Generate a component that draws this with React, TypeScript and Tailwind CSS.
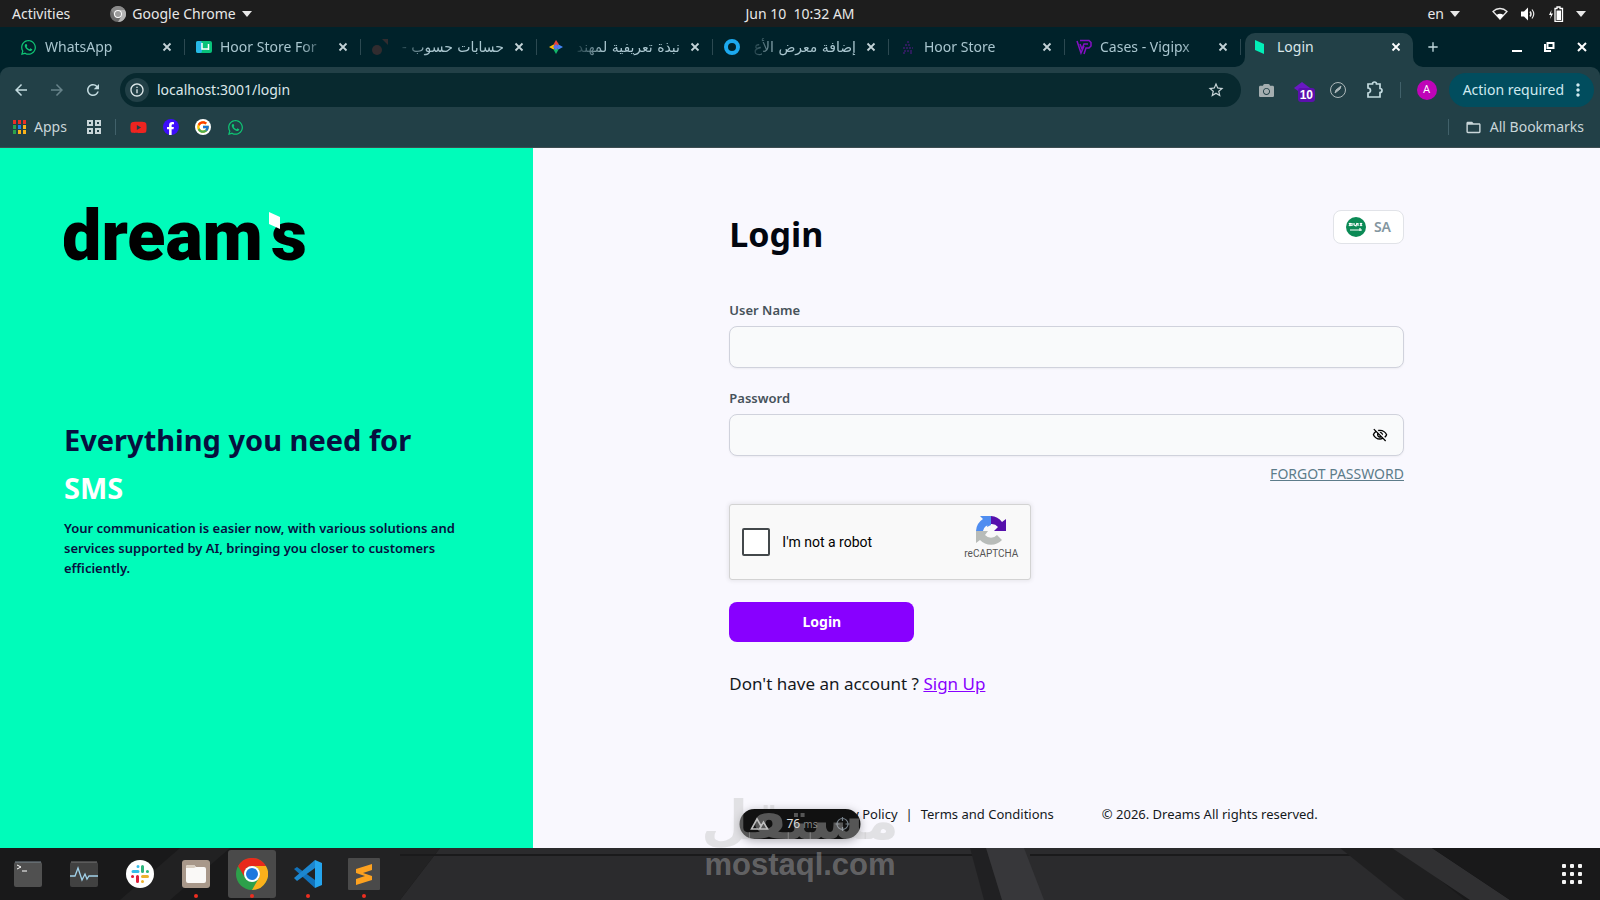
import { useState } from "react";
import type { ReactNode } from "react";
import clsx from "clsx";
import { FaCamera, FaFacebookF, FaWhatsapp, FaYoutube } from "react-icons/fa";
import { FcGoogle } from "react-icons/fc";
import {
  MdAdd,
  MdArrowBack,
  MdArrowForward,
  MdFolderOpen,
  MdInfoOutline,
  MdMoreVert,
  MdOutlineVisibilityOff,
  MdRefresh,
  MdStarBorder,
} from "react-icons/md";

/**
 * Desktop session: system bar, browser window with the Dreams login page, dock.
 */

interface TabItem {
  title: string;
  icon: ReactNode;
  rtl?: boolean;
}

function Caret() {
  return (
    <svg width="10" height="6" viewBox="0 0 10 6" fill="currentColor" aria-hidden="true">
      <path d="M0 0h10L5 6z" />
    </svg>
  );
}

function Cross() {
  return (
    <svg width="14" height="14" viewBox="0 0 14 14" stroke="currentColor" strokeWidth="1.800" aria-hidden="true">
      <path d="M3.500 3.500l7 7M10.500 3.500l-7 7" />
    </svg>
  );
}

function ChromeMark({ size, mono = false }: { size: number; mono?: boolean }) {
  const [red, yellow, green, blue] = mono
    ? ["#8a8a8a", "#b5b5b5", "#6c6c6c", "#9c9c9c"]
    : ["#e8291c", "#fbb01b", "#2da04a", "#1a78de"];
  return (
    <svg width={size} height={size} viewBox="0 0 32 32" aria-hidden="true">
      <circle cx="16" cy="16" r="16" fill={green} />
      <path d="M2.1 8A16 16 0 0 1 29.9 8H16a8 8 0 0 0-6.9 12z" fill={red} />
      <path d="M29.9 8A16 16 0 0 1 16 32l6.9-12A8 8 0 0 0 16 8z" fill={yellow} />
      <circle cx="16" cy="16" r="8" fill="#fff" />
      <circle cx="16" cy="16" r="6" fill={blue} />
    </svg>
  );
}

const TABS: TabItem[] = [
  { title: "WhatsApp", icon: <FaWhatsapp size={17} className="text-[#0fc474]" /> },
  {
    title: "Hoor Store For",
    icon: (
      <svg width="16" height="16" viewBox="0 0 16 16">
        <rect y="2" width="16" height="12" rx="2" fill="#08c27a" />
        <rect y="2" width="6" height="12" rx="2" fill="#27b8e8" />
        <path d="M6 4v6h7M12.500 5v6" fill="none" stroke="#fff" strokeWidth="1.500" />
      </svg>
    ),
  },
  {
    title: "حسابات حسوب -",
    rtl: true,
    icon: (
      <svg width="16" height="16" viewBox="0 0 16 16" fill="#312c2f">
        <circle cx="5" cy="11" r="5" />
        <path d="M10 0h6v6z" />
      </svg>
    ),
  },
  {
    title: "نبذة تعريفية لمهند",
    rtl: true,
    icon: (
      <svg width="16" height="16" viewBox="0 0 16 16">
        <path d="M8 1 5.500 5.500 8 8l3-2.500z" fill="#ea4335" />
        <path d="M1 8l4.500-2.500L8 8l-2.500 2.500z" fill="#fbbc04" />
        <path d="M8 15l-2.500-4.500L8 8l2.500 2.500z" fill="#12b76a" />
        <path d="M15 8l-4.500 2.500L8 8l2.500-2.500z" fill="#4285f4" />
        <path d="M8 5l3 3-3 3-3-3z" fill="#5b6ee8" />
      </svg>
    ),
  },
  {
    title: "إضافة معرض الأع",
    rtl: true,
    icon: (
      <svg width="16" height="16" viewBox="0 0 16 16">
        <circle cx="8" cy="8" r="6" fill="none" stroke="#1ca9ee" strokeWidth="4" />
      </svg>
    ),
  },
  {
    title: "Hoor Store",
    icon: (
      <svg width="16" height="16" viewBox="0 0 16 16" fill="none" stroke="#2c1d5c" strokeWidth="2" strokeDasharray="2 1">
        <path d="M8 2v3M5 6h6M3 9h10M4 12h8M3 14h3M10 14h3" />
      </svg>
    ),
  },
  {
    title: "Cases - Vigipx",
    icon: (
      <svg width="16" height="16" viewBox="0 0 16 16" fill="none" stroke="#8410c4" strokeWidth="1.500">
        <path d="M1 2l4 12 3-7M4 1.500h9l2 2V7l-2 2h-3l-2 6M4 5l2 5 2-5h4" />
      </svg>
    ),
  },
];

function BrowserTab({ tab }: { tab: TabItem }) {
  return (
    <li className="flex w-44 min-w-0 items-center text-[#a9c6cf]">
      <div className="flex min-w-0 flex-1 items-center gap-2 pr-2.5 pl-[11px]">
        <span className="shrink-0">{tab.icon}</span>
        <button
          type="button"
          dir={tab.rtl ? "rtl" : "ltr"}
          className={clsx(
            "min-w-0 flex-1 overflow-hidden text-start text-sm leading-6 whitespace-nowrap",
            tab.rtl
              ? "font-[DejaVu_Sans,sans-serif] [mask-image:linear-gradient(to_left,#000_70%,transparent)]"
              : "[mask-image:linear-gradient(to_right,#000_75%,transparent)]",
          )}
        >
          {tab.title}
        </button>
        <button type="button" aria-label={`Close ${tab.title}`} className="shrink-0 text-[#c3d3d7]">
          <Cross />
        </button>
      </div>
      <span className="h-4 w-px bg-[#2c4951]" />
    </li>
  );
}

function SystemBar() {
  return (
    <header className="grid h-[27px] grid-cols-3 items-center bg-[#1d1d1d] text-sm text-[#e8e8e8]">
      <div className="flex items-center pl-3">
        <button type="button">Activities</button>
        <button type="button" className="ml-10 flex items-center gap-1.5">
          <ChromeMark size={16} mono />
          Google Chrome
          <Caret />
        </button>
      </div>
      <time className="text-center whitespace-pre">Jun 10  10:32 AM</time>
      <div className="flex items-center justify-end pr-3.5">
        <button type="button" className="mr-8 flex items-center gap-1.5">
          en
          <Caret />
        </button>
        <button type="button" aria-label="System menu" className="flex items-center gap-3">
          <svg width="16" height="16" viewBox="0 0 16 16" fill="none">
            <path d="M1 5.500C5 1.500 11 1.500 15 5.500L8 13z" stroke="#e8e8e8" strokeWidth="1.300" />
            <path d="M4.500 9Q8 6.500 11.500 9L8 13.500z" fill="#fff" />
          </svg>
          <svg width="16" height="16" viewBox="0 0 16 16" fill="none" stroke="#e8e8e8">
            <path d="M1 5.500h3l4-4v13l-4-4H1z" fill="#fff" stroke="none" />
            <path d="M10 5.500q2 2.500 0 5" strokeWidth="1.500" />
            <path d="M12 3.500q3.500 4.500 0 9" strokeWidth="1.200" />
          </svg>
          <svg width="16" height="16" viewBox="0 0 16 16" fill="none">
            <path d="M3.500 4 1 9h2l-1 4 3-5.500H3z" fill="#fff" />
            <path d="M7 2.500h2V1h3v1.500h2.500v13H7z" stroke="#fff" strokeWidth="1.300" />
            <path d="M8.500 4.500H13V14H8.500z" fill="#fff" />
          </svg>
          <Caret />
        </button>
      </div>
    </header>
  );
}

function BrowserChrome() {
  return (
    <div className="bg-[#00222a] text-[#c9d6d9]">
      <nav aria-label="Tabs" className="flex h-10 items-center pl-[9px]">
        <ul className="flex h-10 min-w-0 items-center">
          {TABS.map((tab, i) => (
            <BrowserTab key={i} tab={tab} />
          ))}
          <li className="relative mx-1 flex h-[34px] w-[168px] items-center gap-2 self-end rounded-t-[10px] bg-[#224047] pr-2.5 pb-1.5 pl-2">
            <svg width="16" height="16" viewBox="0 0 16 16">
              <path d="M2 1l9 4v10l-9-4z" fill="#02efb8" />
            </svg>
            <button type="button" aria-current="page" className="flex-1 text-left text-sm leading-6 text-[#dbe7ea]">
              Login
            </button>
            <button type="button" aria-label="Close Login" className="text-white">
              <Cross />
            </button>
            {/* flared feet of the active tab */}
            <svg className="absolute bottom-0 -left-2.5" width="10" height="10" viewBox="0 0 10 10">
              <path d="M10 0v10H0A10 10 0 0 0 10 0z" fill="#224047" />
            </svg>
            <svg className="absolute -right-2.5 bottom-0" width="10" height="10" viewBox="0 0 10 10">
              <path d="M0 0v10h10A10 10 0 0 1 0 0z" fill="#224047" />
            </svg>
          </li>
        </ul>
        <button type="button" aria-label="New tab" className="ml-2 text-[#c3dbe0]">
          <MdAdd size={16} />
        </button>
        <div className="ml-auto flex items-center gap-[21px] pr-3 text-white">
          <button type="button" aria-label="Minimize" className="pt-2">
            <svg width="10" height="2" viewBox="0 0 10 2">
              <path d="M0 1h10" stroke="currentColor" strokeWidth="2" />
            </svg>
          </button>
          <button type="button" aria-label="Restore">
            <svg width="12" height="12" viewBox="0 0 12 12" fill="none" stroke="currentColor" strokeWidth="2">
              <path d="M4.500 2h6v5h-6zM2 3v7h6" />
            </svg>
          </button>
          <button type="button" aria-label="Close window">
            <svg width="12" height="12" viewBox="0 0 12 12" stroke="currentColor" strokeWidth="2">
              <path d="M2 2l8 8M10 2l-8 8" />
            </svg>
          </button>
        </div>
      </nav>

      <div className="rounded-t-[9px] border-b border-[#3e4d51] bg-[#224047]">
        <div className="flex h-[46px] items-center pr-1.5 pl-3">
          <div className="flex items-center gap-[18px]">
            <button type="button" aria-label="Back">
              <MdArrowBack size={18} className="text-[#c3dbe0]" />
            </button>
            <button type="button" aria-label="Forward">
              <MdArrowForward size={18} className="text-[#67838a]" />
            </button>
            <button type="button" aria-label="Reload">
              <MdRefresh size={18} className="text-[#c3dbe0]" />
            </button>
          </div>
          <div className="ml-[18px] flex h-[34px] flex-1 items-center rounded-full bg-[#08292f] pr-4 pl-[5px]">
            <button
              type="button"
              aria-label="Site information"
              className="flex size-6 items-center justify-center rounded-full bg-[#224047] text-[#dfe9eb]"
            >
              <MdInfoOutline size={16} />
            </button>
            <input
              aria-label="Address"
              defaultValue="localhost:3001/login"
              className="ml-2 min-w-0 flex-1 bg-transparent text-sm text-[#dbe7ea] outline-none"
            />
            <button type="button" aria-label="Bookmark this tab">
              <MdStarBorder size={18} />
            </button>
          </div>
          <div className="ml-[18px] flex items-center gap-5">
            <FaCamera size={15} className="text-[#a5aeb0]" />
            <span className="relative block size-4">
              <svg width="16" height="12" viewBox="0 0 16 12">
                <path d="M0 6l8-6 8 6-8 6z" fill="#6a18c4" />
              </svg>
              <span className="absolute top-1.5 left-1 rounded-[3px] bg-[#5b10ad] px-[2px] font-[Liberation_Sans,sans-serif] text-[12px] leading-[14px] font-bold text-white">
                10
              </span>
            </span>
            <svg width="16" height="16" viewBox="0 0 16 16" fill="none" stroke="#aeb9bb">
              <circle cx="8" cy="8" r="7.500" />
              <path d="M5 11l1-3 5-4-1 3z" fill="#aeb9bb" />
            </svg>
            <svg width="18" height="18" viewBox="0 0 18 18" fill="none" stroke="#c3dbe0" strokeWidth="1.700">
              <path d="M2 3h4.500a2 2 0 0 1 4 0H14v4.500a2 2 0 0 1 0 4V16H2v-4a2.500 2.500 0 0 0 0-5z" />
            </svg>
          </div>
          <span className="mx-4 h-4 w-px bg-[#41616a]" />
          <button
            type="button"
            aria-label="Profile"
            className="size-5 rounded-full bg-[#c004b8] font-[Roboto,sans-serif] text-[11px] leading-5 text-white"
          >
            A
          </button>
          <button
            type="button"
            className="ml-3 flex h-[34px] items-center gap-1 rounded-full bg-[#014d5e] pr-1.5 pl-3.5 text-sm text-[#cfeaf0]"
          >
            Action required
            <MdMoreVert size={20} />
          </button>
        </div>

        <div className="flex h-[34px] items-center pr-4 pb-1.5 pl-3 text-sm">
          <a href="#apps" className="flex items-center gap-2">
            <svg width="14" height="14" viewBox="0 0 14 14">
              <path d="M1 0h3v4H1zM6 0h3v4H6zM11 0h3v4h-3z" fill="#ee2e24" />
              <path d="M1 5h3v4H1zM1 10h3v4H1z" fill="#2ba24c" />
              <path d="M6 5h3v4H6z" fill="#2180e8" />
              <path d="M11 5h3v4h-3zM6 10h3v4H6zM11 10h3v4h-3z" fill="#f9b31a" />
            </svg>
            Apps
          </a>
          <button type="button" aria-label="Tab groups" className="ml-5">
            <svg width="14" height="14" viewBox="0 0 14 14" fill="none" stroke="currentColor" strokeWidth="2">
              <path d="M1 1h4v4H1zM9 1h4v4H9zM1 9h4v4H1zM9 9h4v4H9z" />
            </svg>
          </button>
          <span className="mx-[14px] h-4 w-px bg-[#41616a]" />
          <div className="flex items-center gap-4">
            <a href="#youtube" aria-label="YouTube" className="text-[#ef2420]">
              <FaYoutube size={17} />
            </a>
            <a
              href="#facebook"
              aria-label="Facebook"
              className="flex size-4 items-end justify-center rounded-full bg-[#3d0dfb] text-white"
            >
              <FaFacebookF size={13} />
            </a>
            <a
              href="#google"
              aria-label="Google"
              className="flex size-4 items-center justify-center rounded-full bg-white"
            >
              <FcGoogle size={14} />
            </a>
            <a href="#whatsapp" aria-label="WhatsApp" className="text-[#0fc474]">
              <FaWhatsapp size={17} />
            </a>
          </div>
          <span className="mr-4 ml-auto h-4 w-px bg-[#41616a]" />
          <button type="button" className="flex items-center gap-2">
            <MdFolderOpen size={17} />
            All Bookmarks
          </button>
        </div>
      </div>
    </div>
  );
}

function DreamsLogo() {
  return (
    <svg width="244" height="54" viewBox="0 0 244 54" role="img" aria-label="dream's">
      <text x="-2" y="53" className="font-[Roboto,sans-serif] text-[70px] font-black">
        dream
      </text>
      <text x="207" y="53" className="font-[Roboto,sans-serif] text-[70px] font-black">
        s
      </text>
      <path d="M205 5l11 5v12l-11-5z" fill="#fff" />
    </svg>
  );
}

function Hero() {
  return (
    <aside className="w-1/3 bg-[#00fcba] px-16 pt-[59px] text-[#07103f]">
      <DreamsLogo />
      <h2 className="mt-[155px] text-[29px] leading-[48px] font-bold">
        Everything you need for
        <span className="block text-white">SMS</span>
      </h2>
      <p className="mt-1.5 max-w-[405px] text-[13px] leading-5 font-semibold">
        Your communication is easier now, with various solutions and services supported by AI,
        bringing you closer to customers efficiently.
      </p>
    </aside>
  );
}

function Recaptcha() {
  return (
    <div className="flex h-[76px] w-[302px] items-center rounded-[3px] border border-[#d3d3d3] bg-[#f9f9f9] px-3 font-[Roboto,sans-serif] shadow-[0_0_4px_1px_rgba(0,0,0,0.08)]">
      <input
        id="robot"
        type="checkbox"
        className="size-7 appearance-none rounded-[2px] border-2 border-[#43484b] bg-white checked:bg-[#4a90e2]"
      />
      <label htmlFor="robot" className="ml-3 text-sm text-black">
        I'm not a robot
      </label>
      <div className="mb-2 ml-auto flex flex-col items-center text-[10px] text-[#555]">
        <svg width="32" height="32" viewBox="0 0 32 32">
          <path d="M5 1h11v9A7 7 0 0 0 8 16H1A15 15 0 0 1 8 4z" fill="#4f8df0" />
          <path d="M16 10l-3-3-1 5z" fill="#4f8df0" />
          <path d="M16 1a15 15 0 0 1 11 6l4-3v12H19l4-4a8 8 0 0 0-7-3z" fill="#5610ac" />
          <path d="M1 16v12l4-3a15 15 0 0 0 22 0l-5-5a8 8 0 0 1-12 0l3-4z" fill="#b8bcb9" />
        </svg>
        <span className="leading-[14px]">reCAPTCHA</span>
      </div>
    </div>
  );
}

const FIELD =
  "block h-[42px] w-full rounded-lg border border-[#d0d2dc] bg-[#f9fafb] px-3 text-sm text-gray-900 shadow-xs outline-none";

const FIELD_LABEL = "block text-[13px] leading-4 font-semibold text-[#46525a]";

function LoginPage() {
  const [showPassword, setShowPassword] = useState(false);

  return (
    <main className="flex flex-1">
      <Hero />
      <section className="flex w-2/3 flex-col bg-[#f9f8fe] px-[12.25%] pt-[62px] text-[#14181c]">
        <div className="flex items-start justify-between">
          <h1 className="text-[34px] leading-[48px] font-bold text-[#02060f]">Login</h1>
          <button
            type="button"
            className="flex h-[34px] items-center gap-2 rounded-lg border border-[#e1e3e8] bg-white px-3 text-sm font-semibold text-[#8496a0]"
          >
            <svg width="20" height="20" viewBox="0 0 20 20">
              <circle cx="10" cy="10" r="10" fill="#0b8a55" />
              <path
                d="M3 6l2 3M5 6L3 9M6 6v3M8 6v2l2 1 1-3M12 6v3M14 6l2 3M16 6l-2 3M4 13h12M14 11v3"
                fill="none"
                stroke="#fff"
                strokeWidth="1.200"
              />
            </svg>
            SA
          </button>
        </div>

        <form className="mt-11" onSubmit={(e) => e.preventDefault()}>
          <label htmlFor="username" className={FIELD_LABEL}>
            User Name
          </label>
          <input id="username" type="text" className={clsx(FIELD, "mt-2")} />

          <label htmlFor="password" className={clsx(FIELD_LABEL, "mt-[22px]")}>
            Password
          </label>
          <div className="relative mt-2">
            <input id="password" type={showPassword ? "text" : "password"} className={FIELD} />
            <button
              type="button"
              aria-label="Show password"
              onClick={() => setShowPassword(!showPassword)}
              className="absolute inset-y-0 right-4 text-black"
            >
              <MdOutlineVisibilityOff size={16} />
            </button>
          </div>
          <div className="mt-2 text-right text-sm text-[#5d7c8a]">
            <a href="#forgot" className="underline">
              FORGOT PASSWORD
            </a>
          </div>

          <div className="mt-5">
            <Recaptcha />
          </div>
          <button
            type="submit"
            className="mt-[22px] h-10 w-[185px] rounded-lg bg-[#8800ff] text-sm font-bold text-white"
          >
            Login
          </button>
        </form>

        <p className="mt-7 text-[17px] leading-7">
          Don't have an account ?{" "}
          <a href="#signup" className="text-[#8800ff] underline">
            Sign Up
          </a>
        </p>

        <footer className="mt-auto flex justify-center gap-12 pb-6 text-[13px] leading-5 whitespace-nowrap">
          <div className="flex gap-2">
            <a href="#privacy">Privacy Policy</a>
            <span>|</span>
            <a href="#terms">Terms and Conditions</a>
          </div>
          <p>© 2026. Dreams All rights reserved.</p>
        </footer>
      </section>
    </main>
  );
}

/** Floating dev-server pill. */
function DevToolsPill() {
  return (
    <div className="absolute bottom-[61px] left-1/2 flex h-[30px] w-[121px] -translate-x-1/2 items-center justify-between rounded-full bg-[#111] px-2.5 text-xs text-[#e0e0e0] shadow-[0_2px_10px_rgba(0,0,0,0.3)]">
      <svg width="20" height="14" viewBox="0 0 20 14" fill="none" stroke="#bdbdbd" strokeWidth="1.600">
        <path d="M9 12H2L7.500 2l4 7M10 12l4-7 4 7z" />
      </svg>
      <span>
        76 <span className="text-[10px] text-[#858585]">ms</span>
      </span>
      <svg width="16" height="16" viewBox="0 0 16 16" fill="none" stroke="#77818a" strokeWidth="1.200">
        <circle cx="8" cy="8" r="5.500" />
        <path d="M8 1v4M8 11v4M1 8h4M11 8h4" />
      </svg>
    </div>
  );
}

function Watermark() {
  return (
    <div className="pointer-events-none absolute bottom-[17px] left-1/2 flex -translate-x-1/2 flex-col items-center font-bold text-[#bdbdbd]/40">
      <span lang="ar" dir="rtl" className="font-[DejaVu_Sans,sans-serif] text-[54px] leading-[52px]">
        مستقل
      </span>
      <span className="font-[Liberation_Sans,sans-serif] text-[31px] leading-9">mostaql.com</span>
    </div>
  );
}

const DOCK = [
  {
    name: "Terminal",
    icon: (
      <svg width="28" height="26" viewBox="0 0 28 26" fill="none">
        <rect width="28" height="25" y="1" rx="2" fill="#505050" />
        <path d="M1 1h26" stroke="#7a8790" />
        <path d="M3 4l4 2-4 2M8 10h5" stroke="#fff" />
      </svg>
    ),
  },
  {
    name: "System Monitor",
    icon: (
      <svg width="28" height="26" viewBox="0 0 28 26" fill="none">
        <rect width="28" height="25" y="1" rx="2" fill="#414141" />
        <path d="M1 1h26" stroke="#777" />
        <path d="M0 15h5l3-8 4 12 3-6 2 5 2-3h9" stroke="#a2d2ea" strokeWidth="1.300" />
      </svg>
    ),
  },
  {
    name: "Slack",
    icon: (
      <svg width="28" height="28" viewBox="0 0 28 28" strokeWidth="3" strokeLinecap="round">
        <circle cx="14" cy="14" r="14" fill="#fff" />
        <path d="M12 6.500v.1M7 11.500h5" stroke="#35bdea" />
        <path d="M16.500 6.500v5M21.500 11.500h-.1" stroke="#2eb67d" />
        <path d="M16.500 21.500v-.1M16.500 16.500h5" stroke="#ecb22e" />
        <path d="M11.500 16.500v5M6.500 16.500h.1" stroke="#e01e3a" />
      </svg>
    ),
  },
  {
    name: "Files",
    running: true,
    icon: (
      <svg width="28" height="28" viewBox="0 0 28 28">
        <rect width="28" height="28" rx="3" fill="#a8988a" />
        <path d="M4 7q0-2 2-2h6l2 2h8q2 0 2 2v12q0 2-2 2H6q-2 0-2-2z" fill="#faf9f7" />
        <path d="M4 8V7q0-2 2-2h6l2 2-2 1z" fill="#d9cfc2" />
      </svg>
    ),
  },
  { name: "Google Chrome", running: true, active: true, icon: <ChromeMark size={32} /> },
  {
    name: "Visual Studio Code",
    running: true,
    icon: (
      <svg width="28" height="28" viewBox="0 0 28 28">
        <path d="M0 9l3-2 18 13v8z" fill="#1272ba" />
        <path d="M0 18l3 3L21 8V0z" fill="#1c87d0" />
        <path d="M21 0l7 3v22l-7 3z" fill="#25a5ee" />
      </svg>
    ),
  },
  {
    name: "Sublime Text",
    running: true,
    icon: (
      <svg width="32" height="32" viewBox="0 0 32 32">
        <rect width="32" height="32" rx="1" fill="#4a4a4a" />
        <path d="M8 11l16-5v6l-9 3 9 3v4L8 27v-6l9-3-9-3z" fill="#fda11f" />
      </svg>
    ),
  },
];

function Dock() {
  return (
    <nav aria-label="Dock" className="relative flex h-[52px] items-center justify-between bg-[#19191a] pr-[18px] pl-1">
      {/* strip of the wooden wallpaper showing through */}
      <svg className="absolute inset-0 size-full" viewBox="0 0 1600 52" preserveAspectRatio="none" aria-hidden="true">
        <path d="M440 0h960l60 52H400z" fill="#2b2b2d" />
        <path d="M120 52L180 0h50L170 52z" fill="#212122" />
        <path d="M270 0h170l-40 52H270z" fill="#222223" />
        <path d="M400 7h580M1030 7h330" stroke="#1a1a1b" strokeWidth="2" />
        <path d="M970 0h18l16 52h-20z" fill="#202022" />
        <path d="M986 0h38l20 52h-42z" fill="#37373a" />
        <path d="M1340 0h60l65 52h-60z" fill="#1f1f20" />
        <path d="M1392 0h40l78 52h-40z" fill="#303032" />
        <path d="M1432 0h168v52h-90z" fill="#19191a" />
      </svg>
      <ul className="relative flex gap-2">
        {DOCK.map((app) => (
          <li key={app.name} className="relative">
            <button
              type="button"
              aria-label={app.name}
              className={clsx(
                "flex size-12 items-center justify-center rounded-[3px]",
                app.active && "bg-[#4a4a4a]",
              )}
            >
              {app.icon}
            </button>
            {app.running && (
              <span className="absolute bottom-0 left-1/2 size-1 -translate-x-1/2 rounded-full bg-[#ee2e20]" />
            )}
          </li>
        ))}
      </ul>
      <button type="button" aria-label="Show applications" className="relative">
        <svg width="20" height="20" viewBox="0 0 20 20" fill="#f4f4f4">
          {[0, 8, 16].map((y) =>
            [0, 8, 16].map((x) => <rect key={`${x}-${y}`} x={x} y={y} width="4" height="4" rx="1" />),
          )}
        </svg>
      </button>
    </nav>
  );
}

export default function App() {
  return (
    <div className="relative flex min-h-screen flex-col font-[Noto_Sans,sans-serif]">
      <SystemBar />
      <BrowserChrome />
      <LoginPage />
      <Dock />
      <DevToolsPill />
      <Watermark />
    </div>
  );
}
